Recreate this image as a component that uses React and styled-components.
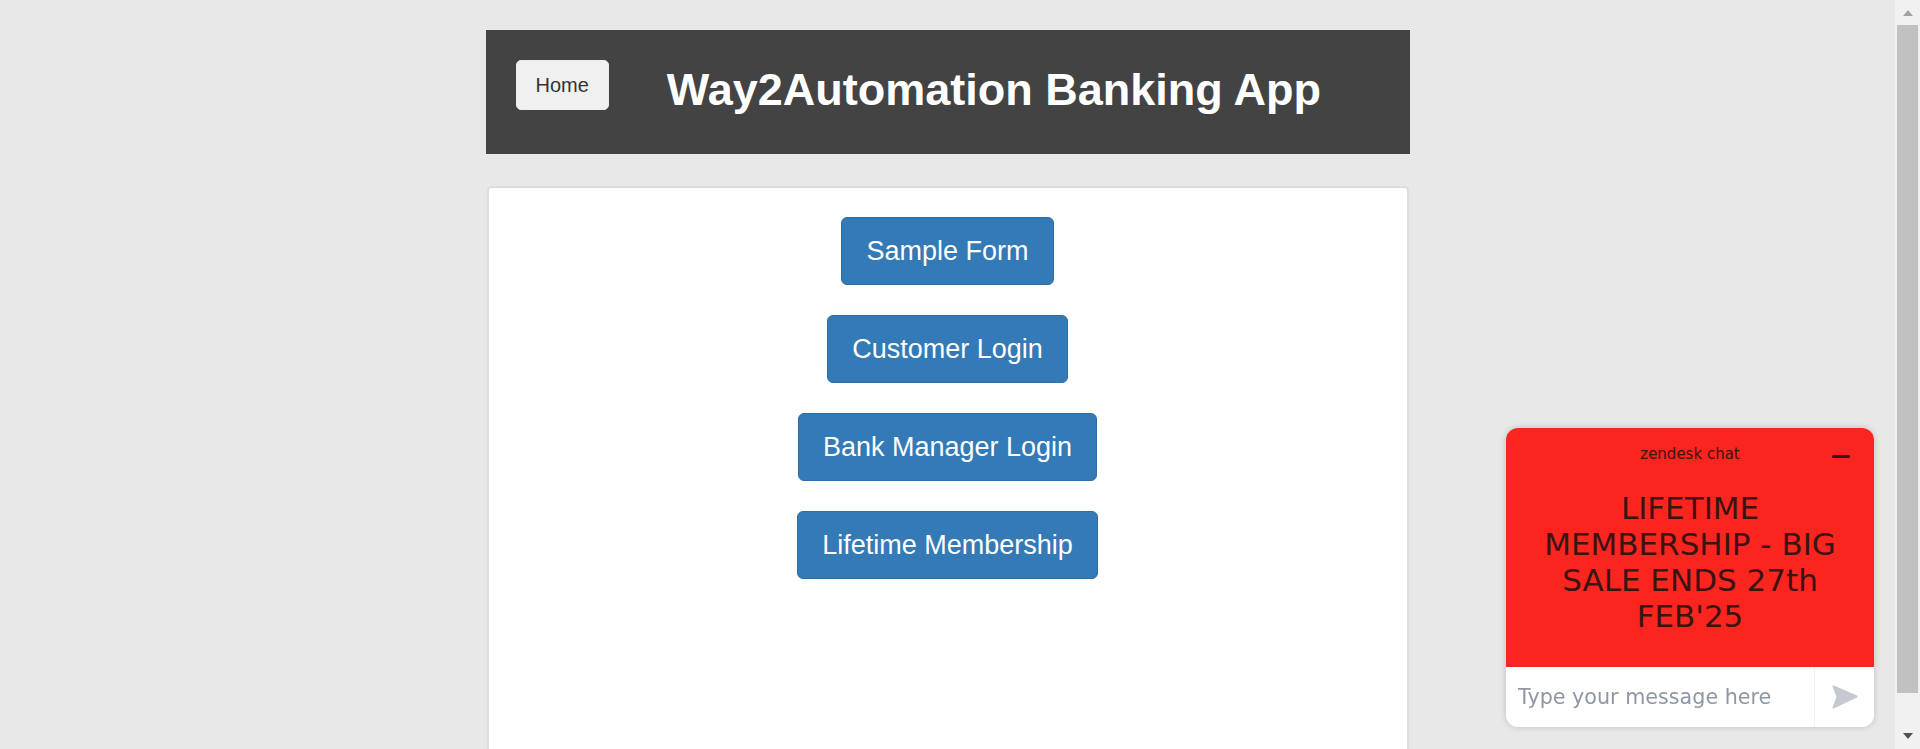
import React from 'react';
import styled, { createGlobalStyle } from 'styled-components';

const GlobalStyle = createGlobalStyle`
  html, body {
    margin: 0;
    padding: 0;
    overflow: hidden;
    background: #e8e8e8;
    font-family: "Liberation Sans", Arial, sans-serif;
  }
`;

const Shell = styled.div`
  display: flex;
  height: 100vh;
`;

const Viewport = styled.div`
  flex: 1;
  min-width: 0;
  overflow: hidden;
`;

const Page = styled.div`
  width: 924px;
  margin: 0 auto;
  padding: 30px 0 10px;
`;

const Header = styled.header`
  display: flex;
  align-items: flex-start;
  height: 124px;
  box-sizing: border-box;
  padding: 30px 30px 0;
  background: #434343;
`;

const HomeButton = styled.button`
  font-family: inherit;
  font-size: 20px;
  line-height: 28px;
  padding: 10px 19px;
  color: #333;
  background: #f0f0f0;
  border: 1px solid #ececec;
  border-radius: 5px;
  cursor: pointer;
`;

const Title = styled.h1`
  margin: 6px 0 0 58px;
  font-size: 45px;
  line-height: 48px;
  font-weight: bold;
  color: #fff;
`;

const Card = styled.main`
  display: flex;
  flex-direction: column;
  align-items: center;
  gap: 30px;
  width: 922px;
  height: 588px;
  box-sizing: border-box;
  margin: 32px auto 0;
  padding-top: 29px;
  background: #fff;
  border: 2px solid #dddddd;
  border-radius: 5px;
`;

const PrimaryButton = styled.button`
  font-family: inherit;
  font-size: 27px;
  line-height: 36px;
  padding: 15px 24px;
  color: #fff;
  background: #337ab7;
  border: 1px solid #2e6da4;
  border-radius: 6px;
  cursor: pointer;
`;

/* classic scrollbar on the right edge */
const Rail = styled.div`
  display: flex;
  flex-direction: column;
  width: 25px;
  background: #f1f1f1;
`;

const RailButton = styled.div`
  display: flex;
  align-items: center;
  justify-content: center;
  height: 25px;
  flex-shrink: 0;

  &::before {
    content: "";
    border-left: 5.5px solid transparent;
    border-right: 5.5px solid transparent;
    ${({ $down }) =>
      $down
        ? 'border-top: 6px solid #505050; margin-top: -1px;'
        : 'border-bottom: 6px solid #a3a3a3; margin-top: 1px;'}
  }
`;

const Track = styled.div`
  flex: 1;
  padding: 0 2px;
`;

const Thumb = styled.div`
  height: 668px;
  background: #c1c1c1;
`;

const ChatWidget = styled.aside`
  position: fixed;
  right: 46px;
  bottom: 22px;
  width: 368px;
  border-radius: 12px;
  overflow: hidden;
  box-shadow: 0 0 6px rgba(0, 0, 0, 0.18);
  font-family: "DejaVu Sans", Verdana, sans-serif;
`;

const ChatTop = styled.div`
  height: 239px;
  box-sizing: border-box;
  padding: 16px 24px 0;
  background: #fb2520;
  color: #3a1312;
`;

const ChatBar = styled.div`
  display: grid;
  grid-template-columns: 1fr auto 1fr;
  align-items: start;
`;

const ChatLabel = styled.div`
  grid-column: 2;
  font-size: 15px;
  line-height: 20px;
`;

const Minimize = styled.button`
  grid-column: 3;
  justify-self: end;
  width: 18px;
  height: 3px;
  margin-top: 11px;
  padding: 0;
  border: none;
  border-radius: 2px;
  background: #3a1312;
  cursor: pointer;
`;

const Promo = styled.p`
  width: 310px;
  margin: 26px auto 0;
  font-size: 31px;
  line-height: 36px;
  text-align: center;
`;

const ChatInputRow = styled.div`
  display: flex;
  height: 60px;
  background: #fff;
`;

const ChatInput = styled.input`
  flex: 1;
  min-width: 0;
  padding: 0 12px;
  border: none;
  outline: none;
  background: transparent;
  font-family: inherit;
  font-size: 20.7px;
  color: #333;

  &::placeholder {
    color: #8d97a5;
  }
`;

const SendButton = styled.button`
  display: flex;
  align-items: center;
  justify-content: center;
  width: 60px;
  padding: 0;
  border: none;
  border-left: 1px solid #f2f2f2;
  background: transparent;
  cursor: pointer;
`;

const buttons = ['Sample Form', 'Customer Login', 'Bank Manager Login', 'Lifetime Membership'];

function SendIcon() {
  return (
    <svg width="26" height="24" viewBox="0 0 26 24">
      <path
        d="M1.5 1.5 L24.5 11.5 L1.5 22.5 L5.5 12 Z"
        fill="#c4cad0"
        stroke="#c4cad0"
        strokeWidth="2"
        strokeLinejoin="round"
      />
    </svg>
  );
}

export default function App() {
  return (
    <>
      <GlobalStyle />
      <Shell>
        <Viewport>
          <Page>
            <Header>
              <HomeButton>Home</HomeButton>
              <Title>Way2Automation Banking App</Title>
            </Header>
            <Card>
              {buttons.map((label) => (
                <PrimaryButton key={label}>{label}</PrimaryButton>
              ))}
            </Card>
          </Page>
        </Viewport>
        <Rail>
          <RailButton />
          <Track>
            <Thumb />
          </Track>
          <RailButton $down />
        </Rail>
      </Shell>
      <ChatWidget>
        <ChatTop>
          <ChatBar>
            <ChatLabel>zendesk chat</ChatLabel>
            <Minimize aria-label="Minimize" />
          </ChatBar>
          <Promo>LIFETIME MEMBERSHIP - BIG SALE ENDS 27th FEB'25</Promo>
        </ChatTop>
        <ChatInputRow>
          <ChatInput placeholder="Type your message here" />
          <SendButton aria-label="Send">
            <SendIcon />
          </SendButton>
        </ChatInputRow>
      </ChatWidget>
    </>
  );
}
